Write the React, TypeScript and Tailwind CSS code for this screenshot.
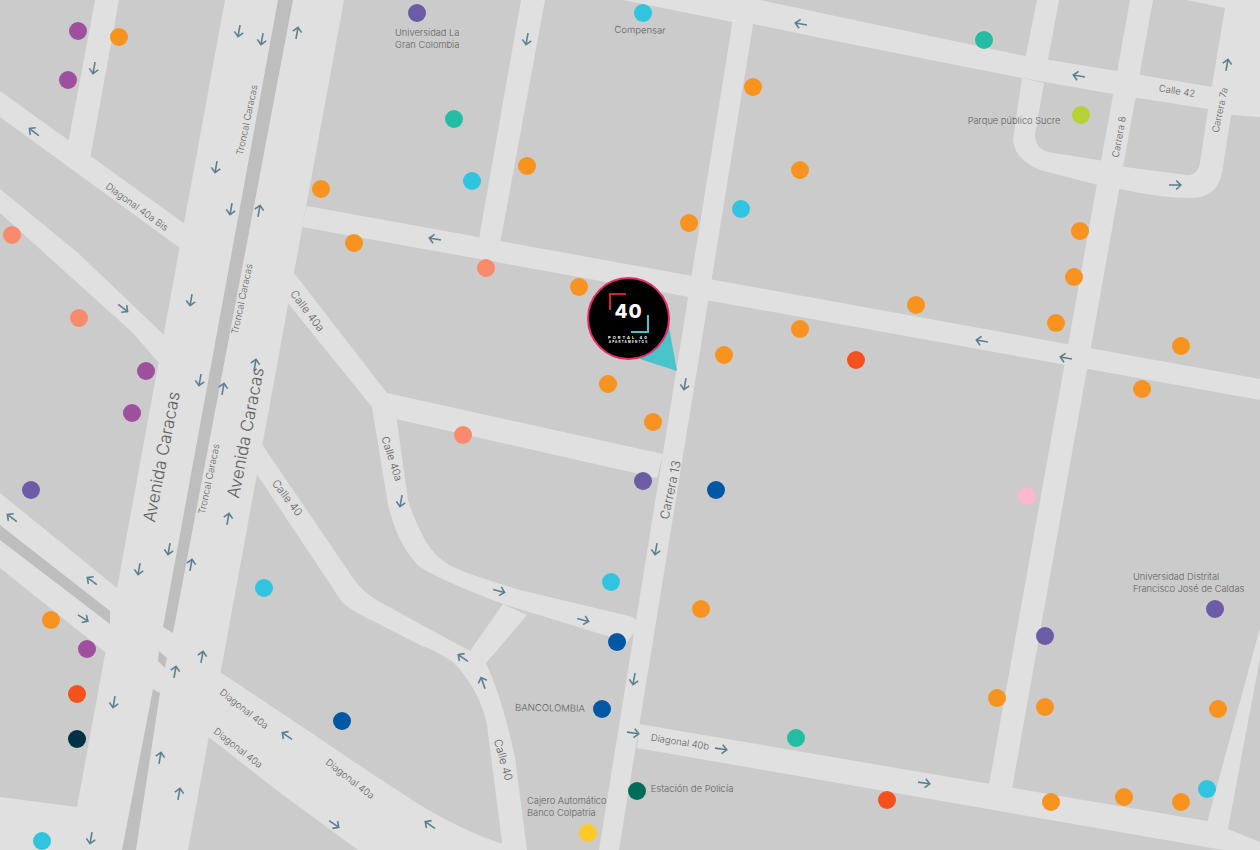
const ROAD = "#e0e0e0";
const MEDIAN = "#bebebe";

const roads: string[] = [
  "M95 0L119 0L90 159L68 144Z",
  "M0 91L185 224L180 248L0 117Z",
  "M0 189L77 252L164 335L175 345L158 362L133 333L0 213Z",
  "M225 0L344 0L188 850L0 850L0 797L77 807Z",
  "M0 493L117 588L220 672L310 732Q370 773 420 805Q465 832 503 844L510 850L358 850L283 795L206 735L105 652L0 568Z",
  "M259 440L353 578Q362 592 380 602L420 624L470 651L486 663Q503 700 515 758L527 850L503 850L487 725Q480 690 453 662Q435 650 420 645L375 622Q350 610 342 602L256 473Z",
  "M470 651L503 604L527 615L486 663Z",
  "M372 407L388 505Q396 535 405 548Q412 560 420 567Q440 580 503 604L627 642L640 625L633 617L520 590Q470 575 453 567Q435 558 425 540Q412 515 408 500L396 415L387 393Z",
  "M294 273L387 393L372 407L287 302Z",
  "M387 393L663 454L657 478L396 419Z",
  "M307 206L1260 379L1260 400L302 227Z",
  "M736 0L757 0L619 850L599 850Z",
  "M623 0L760 0L840 17L1025 56L1117 71L1212 87L1225 100L1208 109L1113 94L1022 78L840 42L753 24L732 22Z",
  "M521 0L545 0L498 255L477 250Z",
  "M1037 0L1059 0L1047 65L1025 60Z",
  "M1130 0L1153 0L1010 800L987 796Z",
  "M1022 78L1044 83L1035 135Q1035 148 1048 152L1104 161L1125 167L1187 175Q1198 175 1200 163L1208 109L1225 8L1187 0L1260 0L1260 117L1231 115L1222 173Q1217 197 1193 198Q1160 198 1120 189L1098 185L1040 170Q1015 160 1013 140Z",
  "M639 724L1207 821L1228 829L1260 842L1260 850L1223 850L637 748Z",
  "M1260 628L1260 658L1228 829L1225 840L1205 830Z",
];

const medians: string[] = [
  "M278 0L293 0L173 633L163 627Z",
  "M153 689L160 693L136 850L122 850Z",
  "M159 651L167 658L165 668L158 661Z",
  "M0 525L110 611L110 624L0 540Z",
];

const arrows: [number, number, number][] = [
  [239, 31, 190], [262, 39, 190], [297, 33, 10], [94, 68, 190], [34, 132, -53], [216, 167, 190],
  [231, 209, 190], [259, 211, 10], [191, 300, 190], [123, 308, 127], [200, 380, 190], [223, 389, 10],
  [255, 365, 10], [12, 518, -53], [228, 519, 10], [169, 549, 190], [139, 569, 190], [191, 565, 10],
  [92, 581, -53], [83, 618, 122], [202, 657, 10], [175, 672, 10], [114, 702, 190], [287, 736, -55],
  [160, 758, 10], [179, 794, 10], [334, 824, 125], [91, 838, 190], [401, 501, 190], [656, 549, 190],
  [499, 591, 105], [583, 620, 105], [463, 658, -55], [483, 683, -20], [634, 679, 190], [633, 733, 98],
  [721, 749, 98], [430, 825, -55], [1079, 76, -80], [1227, 65, 10], [1175, 185, 90], [982, 341, -80],
  [1066, 358, -80], [924, 783, 98], [527, 39, 190], [801, 24, -80], [435, 239, -80], [685, 384, 190],
];

const pinGroups: [string, [number, number][]][] = [
  ["#9e509f", [[77.5, 30.5], [68, 80], [146, 371], [132, 413], [87, 648.5]]],
  ["#f7931e", [[119, 37], [320.5, 189], [353.5, 243], [527, 166], [579, 287], [607.5, 384], [653, 422], [689, 222.5], [753, 87], [800, 170], [723.5, 355], [800, 329], [916, 305], [1080, 231], [1074, 277], [1055.5, 322.5], [1181, 346], [1142, 389], [701, 609], [997, 698], [1045, 707], [1218, 709], [1051, 802], [1124, 797], [1181, 802], [50.5, 620]]],
  ["#f98b6c", [[12, 235], [78.5, 318], [486, 268], [462.5, 434.5]]],
  ["#6b5ca5", [[416.5, 13], [30.5, 490], [643, 481], [1045, 635.5], [1215, 608.5]]],
  ["#2fc4df", [[643, 13], [472, 180.5], [741, 208.5], [611, 581.5], [264, 588], [1207, 788.5], [41.5, 841]]],
  ["#24bca3", [[454, 118.5], [984, 40], [796, 737.5]]],
  ["#b5d334", [[1080.5, 115]]],
  ["#f4511e", [[855.5, 360], [887, 800], [77, 693.5]]],
  ["#003145", [[77, 739]]],
  ["#0058a5", [[716, 490], [616.5, 642], [602, 708.5], [341.5, 721]]],
  ["#006d5b", [[637, 791]]],
  ["#ffca28", [[587.5, 832.5]]],
  ["#fbb8d0", [[1027, 496]]],
];

const rotated: { t: string; x: number; y: number; a: number; s: number }[] = [
  { t: "Troncal Caracas", x: 247, y: 120, a: -78, s: 9.5 },
  { t: "Troncal Caracas", x: 242, y: 299, a: -78, s: 9.5 },
  { t: "Troncal Caracas", x: 209, y: 479, a: -78, s: 9.5 },
  { t: "Diagonal 40a Bis", x: 137, y: 207, a: 36, s: 9.5 },
  { t: "Calle 40a", x: 307, y: 311, a: 53, s: 11 },
  { t: "Calle 40a", x: 391, y: 459, a: 72, s: 10.5 },
  { t: "Calle 40", x: 287, y: 498, a: 53, s: 11 },
  { t: "Avenida Caracas", x: 162, y: 457, a: -79, s: 17 },
  { t: "Avenida Caracas", x: 246, y: 433, a: -79, s: 17 },
  { t: "Carrera 13", x: 671, y: 490, a: -78, s: 12.5 },
  { t: "Diagonal 40a", x: 244, y: 709, a: 38, s: 9.5 },
  { t: "Diagonal 40a", x: 238, y: 748, a: 38, s: 9.5 },
  { t: "Diagonal 40a", x: 350, y: 779, a: 38, s: 9.5 },
  { t: "Calle 40", x: 503, y: 760, a: 74, s: 11 },
  { t: "Diagonal 40b", x: 680, y: 742, a: 9, s: 9.5 },
  { t: "Calle 42", x: 1177, y: 91, a: 9, s: 9.5 },
  { t: "Carrera 7a", x: 1220, y: 110, a: -78, s: 9.5 },
  { t: "Carrera 8", x: 1119, y: 137, a: -80, s: 9.5 },
  { t: "BANCOLOMBIA", x: 550, y: 708, a: 1, s: 9.5 },
  { t: "Estación de Policía", x: 692, y: 789, a: 0, s: 9.5 },
  { t: "Parque público Sucre", x: 1014, y: 121, a: 0, s: 9.3 },
  { t: "Compensar", x: 640, y: 30, a: 1, s: 9.5 },
];

const blocks: { lines: string[]; x: number; y: number }[] = [
  { lines: ["Universidad La", "Gran Colombia"], x: 395, y: 27 },
  { lines: ["Cajero Automático", "Banco Colpatria"], x: 527, y: 795 },
  { lines: ["Universidad Distrital", "Francisco José de Caldas"], x: 1133, y: 571 },
];

export default function App() {
  return (
    <div className="relative h-[850px] w-[1260px] overflow-hidden bg-[#cbcbcb] font-['Inter',sans-serif] font-light text-[#5f5f5f]">
      <svg className="absolute inset-0" width="1260" height="850" viewBox="0 0 1260 850">
        {roads.map((d, i) => (
          <path key={i} d={d} fill={ROAD} />
        ))}
        {medians.map((d, i) => (
          <path key={i} d={d} fill={MEDIAN} />
        ))}
        {arrows.map(([x, y, a], i) => (
          <g key={i} transform={`translate(${x} ${y}) rotate(${a})`} fill="none" stroke="#5b7e90" strokeWidth="1.6">
            <path d="M0 6L0 -5.5M-4.5 -1.2L0 -5.8L4.5 -1.2" />
          </g>
        ))}
        <path d="M663 295L677 371L640 359Z" fill="#4ac3cb" />
      </svg>

      {rotated.map((l, i) => (
        <span
          key={i}
          className="absolute whitespace-nowrap leading-none"
          style={{ left: l.x, top: l.y, fontSize: l.s, transform: `translate(-50%,-50%) rotate(${l.a}deg)` }}
        >
          {l.t}
        </span>
      ))}

      {blocks.map((b, i) => (
        <div key={i} className="absolute whitespace-nowrap text-[9.3px] leading-3" style={{ left: b.x, top: b.y }}>
          {b.lines.map((line) => (
            <div key={line}>{line}</div>
          ))}
        </div>
      ))}

      {pinGroups.flatMap(([color, pts]) =>
        pts.map(([x, y]) => (
          <div
            key={`${x}-${y}`}
            className="absolute h-[18px] w-[18px] rounded-full"
            style={{ left: x - 9, top: y - 9, backgroundColor: color }}
          />
        ))
      )}

      <div className="absolute left-[587px] top-[277px] flex h-[83px] w-[83px] flex-col items-center rounded-full border-2 border-[#e9296b] bg-black text-white">
        <div className="absolute left-[20px] top-[14px] h-[17px] w-[17px] border-l-2 border-t-2 border-[#d3202f]" />
        <div className="absolute left-[42px] top-[36px] h-[18px] w-[18px] border-b-2 border-r-2 border-[#4ac3cb]" />
        <span className="mt-[23px] text-[19px] font-extrabold leading-[20px] tracking-[1px]">40</span>
        <span className="mt-[13px] text-[4px] font-bold leading-[5px] tracking-[2.1px]">PORTAL 40</span>
        <span className="text-[3px] font-bold leading-[4px] tracking-[1.2px]">APARTAMENTOS</span>
      </div>
    </div>
  );
}
